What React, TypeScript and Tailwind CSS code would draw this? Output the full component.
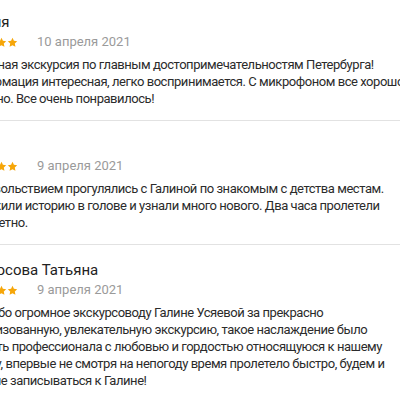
import React from 'react'

type Review = {
  name: string
  date: string
  lines: string[]
}

const reviews: Review[] = [
  {
    name: 'Мария',
    date: '10 апреля 2021',
    lines: [
      'Отличная экскурсия по главным достопримечательностям Петербурга!',
      'Информация интересная, легко воспринимается. С микрофоном все хорошо',
      'слышно. Все очень понравилось!',
    ],
  },
  {
    name: 'Анна',
    date: '9 апреля 2021',
    lines: [
      'С удовольствием прогулялись с Галиной по знакомым с детства местам.',
      'Освежили историю в голове и узнали много нового. Два часа пролетели',
      'незаметно.',
    ],
  },
  {
    name: 'Курносова Татьяна',
    date: '9 апреля 2021',
    lines: [
      'Спасибо огромное экскурсоводу Галине Усяевой за прекрасно',
      'организованную, увлекательную экскурсию, такое наслаждение было',
      'увидеть профессионала с любовью и гордостью относящуюся к нашему',
      'городу, впервые не смотря на непогоду время пролетело быстро, будем и',
      'дальше записываться к Галине!',
    ],
  },
]

function Star() {
  return (
    <svg width="11" height="11" viewBox="0 0 24 24" className="shrink-0">
      <path
        d="M12 1.8l3.1 6.6 7.2.9-5.3 5 1.4 7.1L12 17.9l-6.4 3.5 1.4-7.1-5.3-5 7.2-.9z"
        fill="#f6a609"
      />
    </svg>
  )
}

export default function App() {
  return (
    <div className="w-[400px] h-[400px] overflow-hidden bg-white font-['Roboto',sans-serif]">
      <div className="ml-[-37px] mt-[-3px] w-[480px]">
        {reviews.map((r, i) => (
          <div key={i} className="pt-[15px] pb-[13px] border-b border-[#e2e2e2]">
            <div className="text-[15px] leading-[20px] text-[#222]">{r.name}</div>
            <div className="flex items-center h-[20px]">
              <div className="flex">
                <Star />
                <Star />
                <Star />
                <Star />
                <Star />
              </div>
              <span className="ml-[19px] text-[13px] text-[#9a9a9a]">{r.date}</span>
            </div>
            <p className="mt-[4px] text-[13px] tracking-[-0.45px] leading-[17px] text-[#2b2b2b] whitespace-nowrap">
              {r.lines.map((l, j) => (
                <span key={j} className="block">
                  {l}
                </span>
              ))}
            </p>
          </div>
        ))}
      </div>
    </div>
  )
}
